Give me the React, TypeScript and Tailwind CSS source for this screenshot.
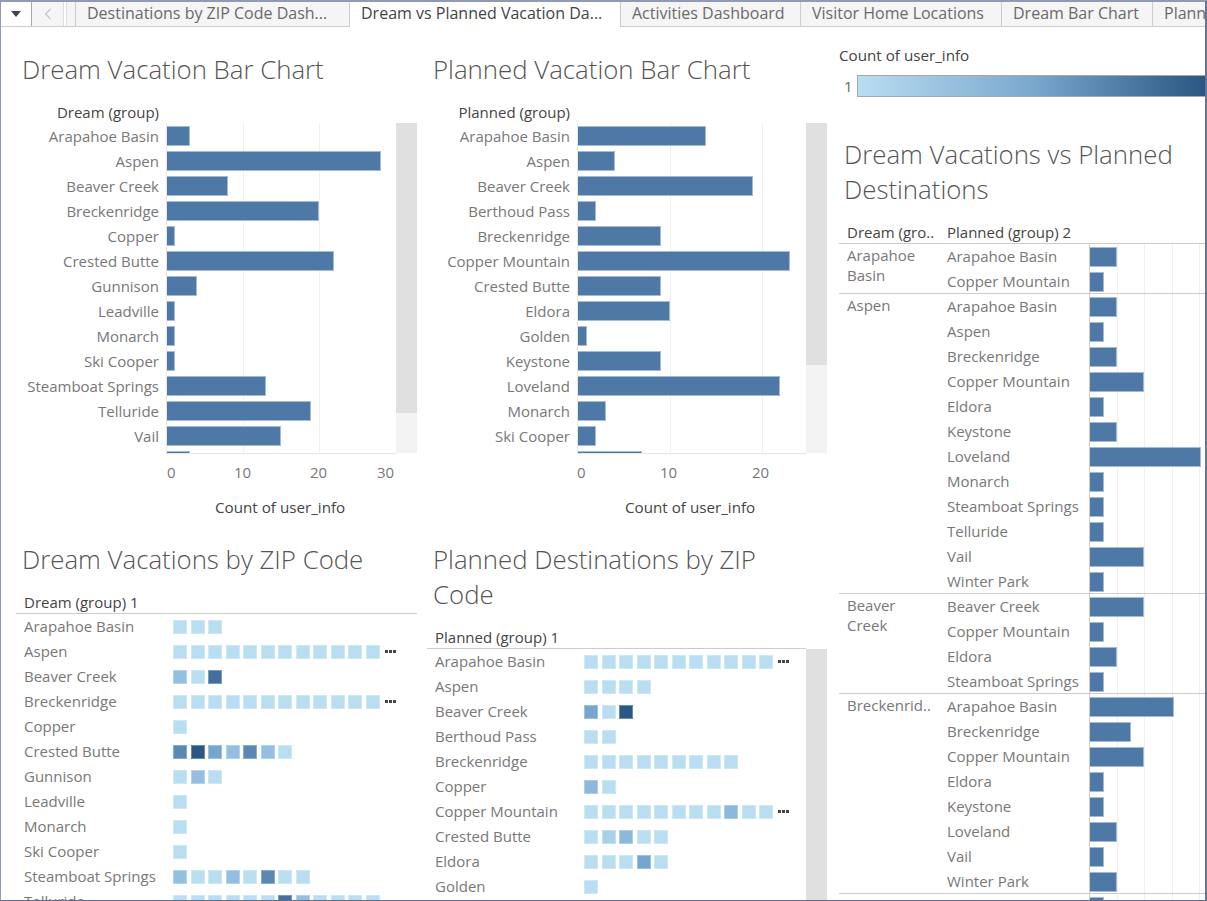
import { ReactNode } from 'react'

const FONT = 'font-["Open_Sans",sans-serif]'

const tabs = [
    { label: 'Destinations by ZIP Code Dash...', width: 'w-[274px]' },
    { label: 'Dream vs Planned Vacation Da...', width: 'w-[271px]', active: true },
    { label: 'Activities Dashboard', width: 'w-[180px]' },
    { label: 'Visitor Home Locations', width: 'w-[201px]' },
    { label: 'Dream Bar Chart', width: 'w-[151px]' },
    { label: 'Planned Bar Chart', width: 'w-[160px]' },
]

const dreamBars: [string, number][] = [
    ['Arapahoe Basin', 3], ['Aspen', 28.15], ['Beaver Creek', 8], ['Breckenridge', 20], ['Copper', 1],
    ['Crested Butte', 22], ['Gunnison', 4], ['Leadville', 1], ['Monarch', 1], ['Ski Cooper', 1],
    ['Steamboat Springs', 13], ['Telluride', 19], ['Vail', 15],
]

const plannedBars: [string, number][] = [
    ['Arapahoe Basin', 13.9], ['Aspen', 4], ['Beaver Creek', 19], ['Berthoud Pass', 2], ['Breckenridge', 9],
    ['Copper Mountain', 23], ['Crested Butte', 9], ['Eldora', 10], ['Golden', 1], ['Keystone', 9],
    ['Loveland', 22], ['Monarch', 3], ['Ski Cooper', 2],
]

// colour steps of the legend, light to dark
const l = 'bg-[#b9ddf1]'
const a = 'bg-[#a9d0ea]'
const b = 'bg-[#93c0e0]'
const c = 'bg-[#8cb9da]'
const d = 'bg-[#76a6cf]'
const e = 'bg-[#5888b3]'
const f = 'bg-[#41709f]'
const g = 'bg-[#2a5783]'

const many = (n: number) => Array.from({ length: n }, () => l)

const dreamHeat: [string, string[], boolean?][] = [
    ['Arapahoe Basin', many(3)],
    ['Aspen', many(12), true],
    ['Beaver Creek', [b, l, f]],
    ['Breckenridge', many(12), true],
    ['Copper', many(1)],
    ['Crested Butte', [e, g, d, b, e, b, l]],
    ['Gunnison', [l, b, l]],
    ['Leadville', many(1)],
    ['Monarch', many(1)],
    ['Ski Cooper', many(1)],
    ['Steamboat Springs', [b, l, l, b, l, e, l, l]],
    ['Telluride', [l, l, l, l, l, l, f, b, l, l, l, l]],
]

const plannedHeat: [string, string[], boolean?][] = [
    ['Arapahoe Basin', many(11), true],
    ['Aspen', many(4)],
    ['Beaver Creek', [d, l, g]],
    ['Berthoud Pass', many(2)],
    ['Breckenridge', many(9)],
    ['Copper', [c, l]],
    ['Copper Mountain', [l, l, l, l, l, l, l, l, c, l, l], true],
    ['Crested Butte', [l, a, c, l, l]],
    ['Eldora', [l, l, l, d, l]],
    ['Golden', many(1)],
]

const groups: { name: string[]; rows: [string, number][] }[] = [
    { name: ['Arapahoe', 'Basin'], rows: [['Arapahoe Basin', 2], ['Copper Mountain', 1]] },
    {
        name: ['Aspen'],
        rows: [
            ['Arapahoe Basin', 2], ['Aspen', 1], ['Breckenridge', 2], ['Copper Mountain', 4], ['Eldora', 1], ['Keystone', 2],
            ['Loveland', 8.15], ['Monarch', 1], ['Steamboat Springs', 1], ['Telluride', 1], ['Vail', 4], ['Winter Park', 1],
        ],
    },
    { name: ['Beaver', 'Creek'], rows: [['Beaver Creek', 4], ['Copper Mountain', 1], ['Eldora', 2], ['Steamboat Springs', 1]] },
    {
        name: ['Breckenrid..'],
        rows: [
            ['Arapahoe Basin', 6.15], ['Breckenridge', 3], ['Copper Mountain', 4], ['Eldora', 1], ['Keystone', 1],
            ['Loveland', 2], ['Vail', 1], ['Winter Park', 2],
        ],
    },
    { name: [''], rows: [['', 1]] },
]

const Title = ({ children }: { children: ReactNode }) => (
    <h2 className="text-[25.8px] leading-[35px] font-light text-[#555555] whitespace-nowrap">{children}</h2>
)

const GridLines = ({ unit, ticks }: { unit: number; ticks: number[] }) => (
    <>
        {ticks.map((t) => (
            <div key={t} className="absolute top-0 bottom-[1px] w-px bg-[#f0f0f0]" style={{ left: t * unit }} />
        ))}
    </>
)

const Bar = ({ width }: { width: number }) => (
    <div className="h-[20px] bg-[#4e79a7] border border-l-0 border-[#a3bbd5] relative" style={{ width }} />
)

interface BarChartProps {
    header: string;
    rows: [string, number][];
    unit: number;
    ticks: number[];
    axis: number[];
    lastWidth: number;
    thumb: string;
    offset: string;
    titleOffset: string;
}

const BarChart = ({ header, rows, unit, ticks, axis, lastWidth, thumb, offset, titleOffset }: BarChartProps) => (
    <div className="flex flex-col">
        <div className={`flex ${offset}`}>
            <div className="w-[143px] pr-[7px] h-[23px] flex justify-end text-[15px] leading-[25px] font-medium text-[#444444] whitespace-nowrap">{header}</div>
        </div>
        <div className={`flex ${offset} h-[331px]`}>
            <div className="w-[143px] pr-[7px] flex flex-col items-end pt-px">
                {rows.map(([name]) => (
                    <div key={name} className="h-[25px] shrink-0 text-[15px] leading-[25px] text-[#787878] whitespace-nowrap">{name}</div>
                ))}
            </div>
            <div className="relative flex-1 border-l border-b border-[#e6e6e6] overflow-hidden">
                <GridLines unit={unit} ticks={ticks} />
                <div className="relative flex flex-col gap-[5px] pt-[3px]">
                    {rows.map(([name, v]) => <Bar key={name} width={v * unit} />)}
                    <Bar width={lastWidth} />
                </div>
            </div>
            <div className="w-[21px] flex flex-col bg-[#f3f3f3] h-[330px]">
                <div className={`${thumb} bg-[#e0e0e0]`} />
            </div>
        </div>
        <div className={`relative h-[41px] ${titleOffset}`}>
            {axis.map((t) => (
                <span
                    key={t}
                    className="absolute top-[7px] text-[15px] leading-[22px] text-[#787878]"
                    style={{ left: t === 0 ? 0 : Math.min(t * unit - 9, 210) }}
                >
                    {t}
                </span>
            ))}
        </div>
        <div className={`${titleOffset} h-[25px] text-[15.2px] leading-[25px] text-[#444444] whitespace-nowrap`}>
            <span className="inline-block ml-[48px]">Count of user_info</span>
        </div>
    </div>
)

const HeatRow = ({ name, cells, more, labelWidth }: { name: string; cells: string[]; more?: boolean; labelWidth: string }) => (
    <div className="flex h-[25px] shrink-0 items-center">
        <div className={`${labelWidth} shrink-0 text-[15px] leading-[25px] text-[#787878] whitespace-nowrap`}>{name}</div>
        <div className="flex gap-[3.5px]">
            {cells.map((cell, i) => (
                <div key={i} className={`w-[14px] h-[14px] border border-white/30 ${cell}`} />
            ))}
        </div>
        {more && (
            <div className="ml-[5px] flex gap-[1px]">
                <span className="w-[3px] h-[3px] bg-[#444444]" />
                <span className="w-[3px] h-[3px] bg-[#444444]" />
                <span className="w-[3px] h-[3px] bg-[#444444]" />
            </div>
        )}
    </div>
)

const App = () => {
    return (
        <div className={`w-[1207px] h-[901px] overflow-hidden flex flex-col bg-white border-t-2 border-l border-r-2 border-b border-t-[#8f9ab4] border-l-[#8f9ab4] border-r-[#67749a] border-b-[#5e6d90] ${FONT}`}>
            {/* tab strip */}
            <div className="flex h-[25px] shrink-0 border-b border-[#cccccc] bg-[#f5f5f5]">
                <div className="w-[31px] shrink-0 bg-white border-r border-[#a9a9a9] flex items-center justify-center pb-px">
                    <svg width="10" height="6" viewBox="0 0 10 6"><path d="M0 0h10L5 6z" fill="#444444" /></svg>
                </div>
                <div className="w-[32px] shrink-0 border-r border-[#dddddd] flex items-center justify-center">
                    <svg width="8" height="12" viewBox="0 0 8 12" fill="none" stroke="#c4c4c4" strokeWidth="1.2"><path d="M6.5 1 1.5 6l5 5" /></svg>
                </div>
                <div className="w-[2px] shrink-0 bg-white" />
                <div className="w-[9px] shrink-0 border-l border-[#dddddd]" />
                {tabs.map((tab) => (
                    <div
                        key={tab.label}
                        className={`${tab.width} shrink-0 pl-[11px] h-[25px] border-l border-[#cccccc] text-[16px] leading-[23px] whitespace-nowrap overflow-hidden ${tab.active ? 'bg-white text-[#444444]' : 'text-[#6a6a6a]'}`}
                    >
                        {tab.label}
                    </div>
                ))}
            </div>

            <div className="flex flex-1 min-h-0">
                {/* first column */}
                <div className="w-[416px] shrink-0 flex flex-col overflow-hidden">
                    <div className="pl-[21px] pt-[25px] pb-[13px]"><Title>Dream Vacation Bar Chart</Title></div>
                    <BarChart
                        header="Dream (group)"
                        rows={dreamBars}
                        unit={7.6}
                        ticks={[10, 20]}
                        axis={[0, 10, 20, 30]}
                        lastWidth={23}
                        thumb="h-[290px]"
                        offset="pl-[22px]"
                        titleOffset="ml-[166px]"
                    />
                    <div className="pl-[21px] pt-[22px] pb-[13px]"><Title>Dream Vacations by ZIP Code</Title></div>
                    <div className="ml-[15px] pl-[8px] h-[24px] shrink-0 border-b border-[#cccccc] text-[15px] leading-[24px] font-medium text-[#444444]">Dream (group) 1</div>
                    <div className="pl-[23px] flex flex-col">
                        {dreamHeat.map(([name, cells, more]) => (
                            <HeatRow key={name} name={name} cells={cells} more={more} labelWidth="w-[149px]" />
                        ))}
                    </div>
                </div>

                {/* second column */}
                <div className="w-[400px] shrink-0 ml-[10px] flex flex-col overflow-hidden">
                    <div className="pl-[6px] pt-[25px] pb-[13px]"><Title>Planned Vacation Bar Chart</Title></div>
                    <BarChart
                        header="Planned (group)"
                        rows={plannedBars}
                        unit={9.2}
                        ticks={[10, 20]}
                        axis={[0, 10, 20]}
                        lastWidth={64}
                        thumb="h-[242px]"
                        offset="pl-[7px]"
                        titleOffset="ml-[150px]"
                    />
                    <div className="pl-[6px] pt-[22px] pb-[12px]">
                        <Title>Planned Destinations by ZIP<br />Code</Title>
                    </div>
                    <div className="w-[379px] pl-[8px] h-[25px] shrink-0 border-b border-[#cccccc] text-[15px] leading-[26px] font-medium text-[#444444]">Planned (group) 1</div>
                    <div className="flex flex-1 min-h-0">
                        <div className="w-[379px] pl-[8px] flex flex-col">
                            {plannedHeat.map(([name, cells, more]) => (
                                <HeatRow key={name} name={name} cells={cells} more={more} labelWidth="w-[149px]" />
                            ))}
                        </div>
                        <div className="w-[21px] bg-[#e0e0e0]" />
                    </div>
                </div>

                {/* third column */}
                <div className="flex-1 min-w-0 ml-[12px] flex flex-col overflow-hidden">
                    <div className="h-[23px] mt-[17px] text-[15.2px] leading-[23px] text-[#444444]">Count of user_info</div>
                    <div className="flex items-center mt-[8px] h-[22px]">
                        <span className="w-[18px] pl-[5px] text-[15px] text-[#666666]">1</span>
                        <div className="flex-1 h-[22px] border-y border-l border-[#a8a8a8] bg-gradient-to-r from-[#b9ddf1] via-[#7aa8ce] via-50% to-[#2a5783]" />
                    </div>
                    <div className="pl-[5px] pt-[40px] pb-[13px]"><Title>Dream Vacations vs Planned<br />Destinations</Title></div>
                    <div className="flex h-[24px] shrink-0 border-b border-[#cccccc] text-[15px] leading-[25px] font-medium text-[#444444]">
                        <div className="w-[108px] pl-[8px] whitespace-nowrap">Dream (gro..</div>
                        <div className="whitespace-nowrap">Planned (group) 2</div>
                    </div>
                    <div className="flex flex-col">
                        {groups.map((group, gi) => (
                            <div key={gi} className="flex shrink-0 shadow-[inset_0_-1px_0_#cccccc]">
                                <div className="w-[108px] shrink-0 pl-[8px] pt-[1px] text-[15px] leading-[20px] text-[#787878]">
                                    {group.name.map((n) => <div key={n}>{n}</div>)}
                                </div>
                                <div className="w-[142px] shrink-0">
                                    {group.rows.map(([name], i) => (
                                        <div key={i} className="h-[25px] text-[15px] leading-[25px] text-[#787878] whitespace-nowrap">{name}</div>
                                    ))}
                                </div>
                                <div className="relative flex-1 border-l border-[#cccccc] overflow-hidden">
                                    <GridLines unit={13.6} ticks={[2, 4, 6, 8]} />
                                    <div className="relative flex flex-col gap-[5px] pt-[3px] pb-[2px]">
                                        {group.rows.map(([, v], i) => <Bar key={i} width={v * 13.6} />)}
                                    </div>
                                </div>
                            </div>
                        ))}
                    </div>
                </div>
            </div>
        </div>
    )
}

export default App
